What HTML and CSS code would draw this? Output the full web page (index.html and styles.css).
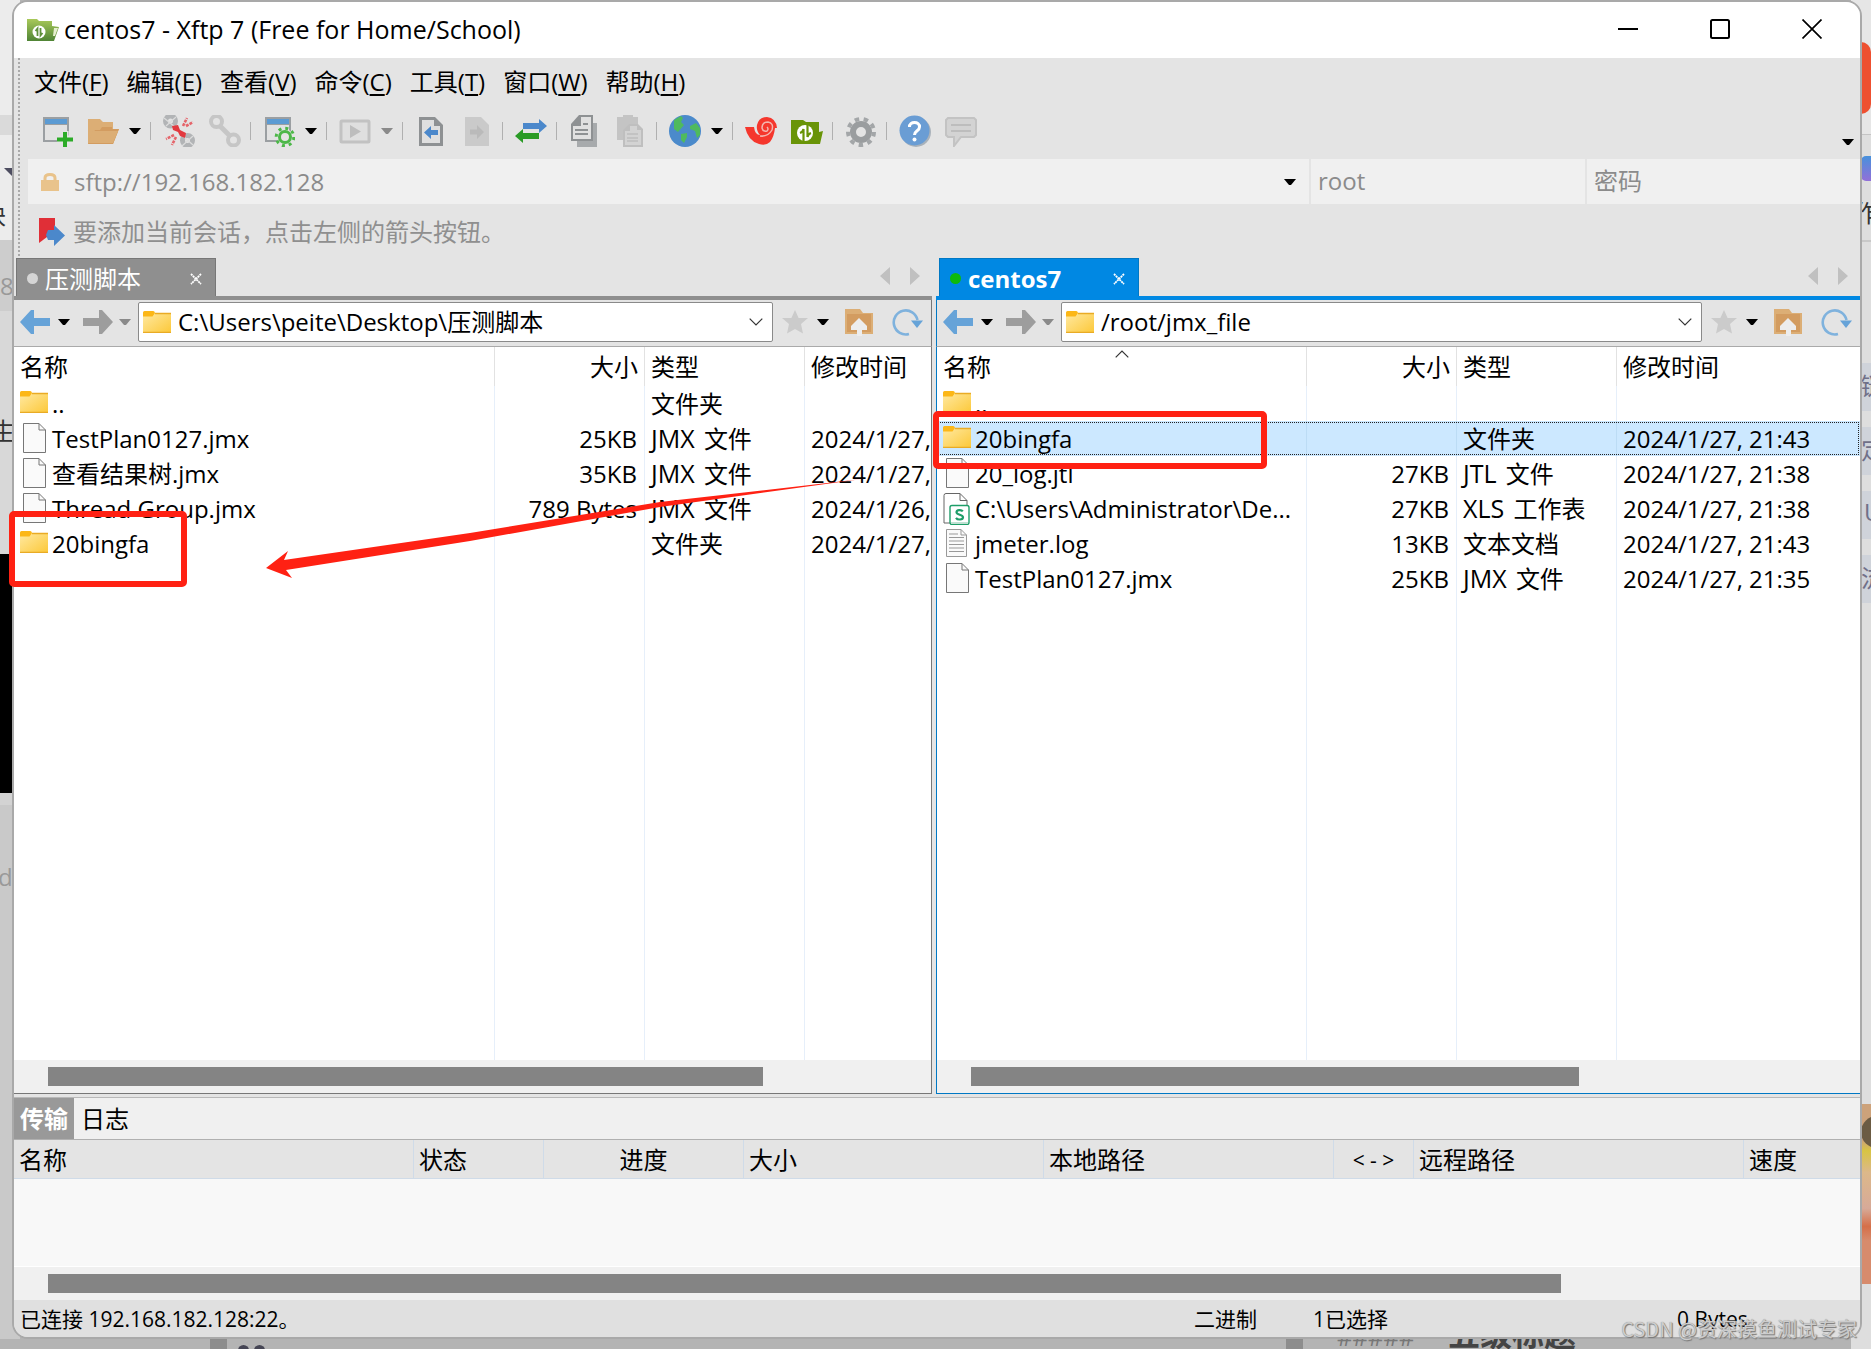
FILE: index.html
```html
<!DOCTYPE html>
<html lang="zh-CN">
<head>
<meta charset="utf-8">
<title>centos7 - Xftp 7</title>
<link rel="stylesheet" href="styles.css">
</head>
<body>
<svg class="defs" aria-hidden="true">
  <defs>
    <linearGradient id="gold" x1="0" y1="0" x2="1" y2="1"><stop offset="0" stop-color="#ffe9a2"/><stop offset="1" stop-color="#fcc838"/></linearGradient>
    <linearGradient id="leaf" x1="0" y1="0" x2="0" y2="1"><stop offset="0" stop-color="#a9c95a"/><stop offset="1" stop-color="#4f8435"/></linearGradient>
  </defs>
  <symbol id="i-folder" viewBox="0 0 28 22"><path d="M0 1.5Q0 0 1.500 0H10Q12 0 12 3V6H0z" fill="#fcb717"/><path d="M0 5.500H9.500L12 2H28V22H0z" fill="url(#gold)"/><path d="M12 2.500H28M0 21.300H28" stroke="#e9ab25" stroke-width="1.300"/></symbol>
  <symbol id="i-file" viewBox="0 0 24 30"><path d="M.5.500H16L22.500 7V29.500H.5z" fill="#fafafa" stroke="#777"/><path d="M16 .5V7H22.500" fill="none" stroke="#777"/></symbol>
  <symbol id="i-text" viewBox="0 0 24 30"><path d="M.5 1.500H15L20.500 7V28.500H.5z" fill="#fafafa" stroke="#999"/><path d="M15 1.500V7H20.500M3 6H12M3 9.500H18M3 13H18M3 16.500H18M3 20H18M3 23.500H18" fill="none" stroke="#999"/></symbol>
  <symbol id="i-xls" viewBox="0 0 27 32"><path d="M3 .5H17L24 7.500V30H1V2.500Q1 .5 3 .5z" fill="#fff" stroke="#666"/><path d="M17 .5V7.500H24" fill="none" stroke="#666"/><rect x="7" y="12.500" width="19" height="19" rx="2" fill="#fff" stroke="#1e9e69" stroke-width="1.400"/><path d="M8 29H25V31H8z" fill="#bfe0d2"/><path d="M19.800 18.300C18.500 16.500 13.500 16.500 13.500 19.300S20 21.500 20 24.300S14.500 27.200 13 24.800" fill="none" stroke="#1e9e69" stroke-width="2.200"/></symbol>
  <symbol id="i-back" viewBox="0 0 30 24"><path d="M0 12L11 0H14V8H30V16H14V24H11z" fill="#66a3d8"/></symbol>
  <symbol id="i-forward" viewBox="0 0 30 24"><path d="M30 12L19 0H16V8H0V16H16V24H19z" fill="#9d9d9d"/></symbol>
  <symbol id="i-caret" viewBox="0 0 12 8"><path d="M0 1H12L7 7H5z" fill="currentColor"/></symbol>
  <symbol id="i-chevron" viewBox="0 0 14 8"><path d="M.7.7L7 7L13.300.7" fill="none" stroke="#333" stroke-width="1.200"/></symbol>
  <symbol id="i-star" viewBox="0 0 28 26"><path d="M14 1L17.600 9H27L20 15L22 24.500L14 20L6 24.500L8 15L1 9H10.400z" fill="#cbcbcb"/></symbol>
  <symbol id="i-up" viewBox="0 0 30 28"><path d="M1 1H16L19 5H29V26H1z" fill="#dcae75"/><path d="M3 6H27V24H3z" fill="#d39c60"/><path d="M15 10L23 18V22H18V28H13V22H7V18z" fill="#ededed"/></symbol>
  <symbol id="i-refresh" viewBox="0 0 31 28"><path d="M17 26A12 12 0 1 1 25.500 12" fill="none" stroke="#7fb2dd" stroke-width="2.600"/><path d="M19 12.500H31L25 20z" fill="#66a3d8"/></symbol>
  <symbol id="i-x" viewBox="0 0 12 12"><path d="M1 1L11 11M11 1L1 11" stroke="#fff" stroke-width="1.800" stroke-dasharray="2 .6"/></symbol>
  <symbol id="i-xftp" viewBox="0 0 32 22"><path d="M0 0H10L12 2H25V7L32 8L27 22H0z" fill="url(#leaf)"/><path d="M27 9H31L28 17H26z" fill="#e6efcf"/><circle cx="12" cy="13" r="6.500" fill="#fff"/><path d="M10.500 17V9.500L8.500 12M13.500 9V16.500L15.500 14" fill="none" stroke="#5e903b" stroke-width="1.800"/></symbol>
  <symbol id="i-doc" viewBox="0 0 32 32"><path d="M4 2H20L28 10V31H4z" fill="currentColor"/><path d="M7 5H19V11H25V28H7z" fill="#dfdfdf"/></symbol>
</svg>

<div class="desktop">
  <div class="backdrop" aria-hidden="true">
    <div class="strip strip-left">
      <i class="band" style="top:0;height:115px;background:#ececec"></i>
      <i class="band" style="top:115px;height:20px;background:#dadada"></i>
      <i class="band" style="top:135px;height:105px;background:#ececec"></i>
      <i class="band" style="top:240px;height:71px;background:#cdcdcd"></i>
      <i class="band" style="top:311px;height:243px;background:#d8d8d8"></i>
      <i class="band" style="top:554px;height:239px;background:#000"></i>
      <i class="band" style="top:793px;height:12px;background:#d3d3d3"></i>
      <i class="notch"></i>
      <span class="bit bit-a">块</span><span class="bit bit-b">8</span><span class="bit bit-c">生</span><span class="bit bit-d">d</span>
    </div>
    <div class="strip strip-right">
      <i class="band" style="top:0;height:134px;background:#e6e6e6"></i>
      <i class="band" style="top:134px;height:1px;background:#c4c4c4"></i>
      <i class="disc"></i><i class="bot"></i>
      <i class="band" style="top:240px;height:2px;background:#c8c8c8"></i>
      <i class="band label" style="top:363px"></i><i class="band label" style="top:427px"></i>
      <i class="band label" style="top:491px"></i><i class="band label" style="top:555px"></i>
      <span class="bit bit-e">作</span><span class="bit tag" style="top:369px">链</span><span class="bit tag" style="top:433px">定</span><span class="bit tag tag-u" style="top:495px">U</span><span class="bit tag" style="top:561px">流</span>
      <i class="photo"></i><i class="eye"></i>
    </div>
    <div class="strip strip-bottom">
      <i class="post" style="left:210px"></i><i class="drop-mark" style="left:238px"></i><i class="drop-mark" style="left:254px"></i>
      <i class="post" style="left:1286px"></i>
      <span class="hash">#####</span><span class="heading">五级标题</span>
    </div>
  </div>

  <main class="window">
    <header class="titlebar">
      <svg class="app-icon"><use href="#i-xftp"/></svg>
      <h1>centos7 - Xftp 7 (Free for Home/School)</h1>
      <button aria-label="最小化"><svg width="20" height="20"><path d="M0 10H20" stroke="#000" stroke-width="2"/></svg></button>
      <button aria-label="最大化"><svg width="20" height="20"><rect x="1" y="1" width="18" height="18" rx="1.500" fill="none" stroke="#000" stroke-width="2"/></svg></button>
      <button aria-label="关闭"><svg width="20" height="20"><path d="M.5.500L19.500 19.500M19.500.500L.5 19.500" stroke="#000" stroke-width="1.700"/></svg></button>
    </header>

    <div class="chrome">
      <nav class="menu">
        <button>文件<span>(<u>F</u>)</span></button><button>编辑<span>(<u>E</u>)</span></button><button>查看<span>(<u>V</u>)</span></button><button>命令<span>(<u>C</u>)</span></button><button>工具<span>(<u>T</u>)</span></button><button>窗口<span>(<u>W</u>)</span></button><button>帮助<span>(<u>H</u>)</span></button>
      </nav>
      <div class="toolbar">
        <button aria-label="新建"><svg viewBox="0 0 32 32"><path d="M2 2H28V27H2z" fill="#9b9fa2"/><path d="M4 4H26V9H4z" fill="#5c9bd3"/><path d="M4 10H26V25H4z" fill="#e2e2e2"/><path d="M24 16V32M16 24H32" stroke="#e4e4e4" stroke-width="7"/><path d="M24 17V32M16 24.500H32" stroke="#2cab28" stroke-width="4"/></svg></button>
        <button aria-label="打开"><svg viewBox="0 0 32 32"><path d="M1 4H13L16 7H26V14H32L26 29H1z" fill="#dcae75"/><path d="M3 25L8 15H13L15 12H25V14H32L26 29H1z" fill="#d39c60"/><path d="M6 16H31L26 28H1z" fill="#dcae75"/></svg></button>
        <button class="drop" aria-label="打开列表"><svg><use href="#i-caret"/></svg></button>
        <i class="sep"></i>
        <button aria-label="断开"><svg viewBox="0 0 32 32"><g fill="none" stroke="#b2b4b6" stroke-width="5"><circle cx="7.500" cy="6" r="5"/><circle cx="24.500" cy="25.500" r="5"/></g><g fill="none" stroke="#dcdcdc" stroke-width="1.200"><path d="M1 3L12 12M13 2L3 11M19 20L30 30M30 21L19 31"/></g><path d="M9 11L15 10L17 15L23 18L22 23L17 21L15 17L10 15z" fill="#e2393f"/><path d="M20 11L24 3M23 11L30 7M11 20L3 24M13 22L9 30" stroke="#e5646a" stroke-width="2.600" stroke-dasharray="3 1"/></svg></button>
        <button disabled aria-label="连接"><svg viewBox="0 0 32 32"><g fill="none" stroke="#c6c6c6" stroke-width="4"><circle cx="7.500" cy="6.500" r="5.500"/><circle cx="24.500" cy="25" r="5.500"/></g><path d="M10 10L22 22" stroke="#c6c6c6" stroke-width="5"/></svg></button>
        <i class="sep"></i>
        <button aria-label="属性"><svg viewBox="0 0 32 32"><path d="M2 2H28V27H2z" fill="#9b9fa2"/><path d="M4 4H26V9H4z" fill="#5c9bd3"/><path d="M4 10H26V25H4z" fill="#e2e2e2"/><circle cx="22" cy="22" r="8" fill="#e4e4e4"/><circle cx="22" cy="22" r="5.500" fill="none" stroke="#4cb748" stroke-width="3"/><circle cx="22" cy="22" r="8.800" fill="none" stroke="#4cb748" stroke-width="3" stroke-dasharray="3 3.910"/></svg></button>
        <button class="drop" aria-label="属性列表"><svg><use href="#i-caret"/></svg></button>
        <i class="sep"></i>
        <button disabled aria-label="运行"><svg viewBox="0 0 32 32"><rect x="2" y="6" width="28" height="21" rx="1" fill="#dfdfdf" stroke="#c2c2c2" stroke-width="3"/><path d="M11 10L22 16.500L11 23z" fill="#bdbdbd"/></svg></button>
        <button disabled class="drop" aria-label="运行列表"><svg><use href="#i-caret"/></svg></button>
        <i class="sep"></i>
        <button class="doc" aria-label="向左传输"><svg viewBox="0 0 32 32"><use href="#i-doc"/><path d="M9 17.500L16 11V15H23V20H16V24z" fill="#4b88cb"/></svg></button>
        <button class="doc" disabled aria-label="向右传输"><svg viewBox="0 0 32 32"><path d="M4 2H20L28 10V31H4z" fill="#cacaca"/><path d="M23 17L16 10V14.500H9V19.500H16V24z" fill="#bababa"/></svg></button>
        <i class="sep"></i>
        <button aria-label="同步"><svg viewBox="0 0 32 32"><path d="M8 8H24V4L32 11L24 18V14H8z" fill="#4b88cb"/><path d="M24 18H8V14L0 21L8 28V24H24z" fill="#2a9b26"/></svg></button>
        <i class="sep"></i>
        <button aria-label="复制"><svg viewBox="0 0 32 32"><path d="M8 8H28V32H8z" fill="#a7aaac"/><path d="M10 0H24V26H2V9z" fill="#8e9193"/><path d="M12 2H22V24H4V11H12z" fill="#e0e0e0"/><path d="M14 9H19M6 15H19M6 19H19" stroke="#8e9193" stroke-width="1.800"/></svg></button>
        <button disabled aria-label="粘贴"><svg viewBox="0 0 32 32"><path d="M2 2H8V0H18V2H23V25H2z" fill="#c4c4c4"/><path d="M14 9H23L28 14V32H8V15z" fill="#bfbfbf"/><path d="M15 11H22V15H26V30H10V16H15z" fill="#d3d3d3"/><path d="M12 19H23M12 23H23M12 26H23" stroke="#bfbfbf" stroke-width="1.400"/></svg></button>
        <i class="sep"></i>
        <button aria-label="语言"><svg viewBox="0 0 32 32"><circle cx="16" cy="16" r="16" fill="#4b8acb"/><path d="M5 5L12 1L14 3L12 7L15 10L9 17L5 14zM12 19L18 18V22L15 28L12 25zM21 11L27 8L31 13V20L28 23L26 16L21 14z" fill="#4fba5e"/></svg></button>
        <button class="drop" aria-label="语言列表"><svg><use href="#i-caret"/></svg></button>
        <i class="sep"></i>
        <button aria-label="Xshell"><svg viewBox="0 0 32 32"><path d="M0 12H9Q10 20 15 20Q11 16 12 10Q14 2 22 2Q31 3 32 13H30Q29 22 25 27Q21 31 14 29Q3 26 0 12" fill="#f5372d"/><path d="M15 21Q23 22 27 15Q29 8 23 7Q17 7 17 13Q18 17 22 16Q24 14 22 12" fill="none" stroke="#f3b4ae" stroke-width="1.500"/></svg></button>
        <button aria-label="Xftp"><svg viewBox="0 0 32 32"><path d="M0 5H12L15 7H28V17L32 16L29 29H0z" fill="#699407"/><circle cx="14" cy="18" r="8" fill="#fff"/><path d="M12.500 26V14Q12 17 9 18M16.500 10V22Q17 19 20 18" fill="none" stroke="#699407" stroke-width="2.200"/></svg></button>
        <i class="sep"></i>
        <button aria-label="选项"><svg viewBox="0 0 32 32"><circle cx="16" cy="17" r="8" fill="none" stroke="#9a9d9f" stroke-width="6"/><circle cx="16" cy="17" r="13" fill="none" stroke="#a3a6a8" stroke-width="4" stroke-dasharray="4.500 4.580"/></svg></button>
        <i class="sep"></i>
        <button aria-label="帮助"><svg viewBox="0 0 32 32"><circle cx="17" cy="17" r="15" fill="#a9b2ba"/><circle cx="15.500" cy="15.500" r="15" fill="#6a9dd4"/><path d="M10.500 12C10 6 21 6 20.500 12C20.500 16 15.500 15.500 15.500 20" fill="none" stroke="#fff" stroke-width="3"/><circle cx="15.500" cy="24.500" r="2" fill="#fff"/></svg></button>
        <button disabled aria-label="反馈"><svg viewBox="0 0 32 32"><path d="M3 3H29L31 5V20L29 22H16L9 31V22H3L1 20V5z" fill="#d3d3d3" stroke="#c3c3c3" stroke-width="2"/><path d="M6 10H26M6 16H26" stroke="#bdbdbd" stroke-width="2"/></svg></button>
        <button class="overflow" aria-label="更多"><svg><use href="#i-caret"/></svg></button>
      </div>
      <div class="address">
        <label class="host"><svg viewBox="0 0 18 18"><path d="M4 8V5Q4 1.500 9 1.500T14 5V8" fill="none" stroke="#e9c38b" stroke-width="3"/><path d="M0 7H18V18H0z" fill="#e9c38b"/></svg><input aria-label="主机" value="sftp://192.168.182.128"><button aria-label="主机列表"><svg><use href="#i-caret"/></svg></button></label>
        <input aria-label="用户名" value="root">
        <input aria-label="密码" type="password" placeholder="密码">
      </div>
      <div class="hint"><svg viewBox="0 0 26 28"><path d="M0 0H16V13L0 25z" fill="#e02f37"/><path d="M9 12H15V7L26 17.500L15 28V22H9L7 17z" fill="#4b88cb"/></svg><p>要添加当前会话，点击左侧的箭头按钮。</p></div>
    </div>

    <div class="panels">
      <section class="panel local">
        <div class="tabs">
          <div class="tab"><i class="dot"></i><span>压测脚本</span><button aria-label="关闭标签"><svg><use href="#i-x"/></svg></button></div>
          <svg class="scroller" viewBox="0 0 40 18"><path d="M10 0V18L0 9zM30 0V18L40 9z" fill="#c0c0c0"/></svg>
        </div>
        <div class="nav">
          <button aria-label="后退"><svg class="arrow"><use href="#i-back"/></svg></button><button class="drop" aria-label="后退列表"><svg><use href="#i-caret"/></svg></button>
          <button class="fwd" disabled aria-label="前进"><svg class="arrow"><use href="#i-forward"/></svg></button><button class="drop narrow" disabled aria-label="前进列表"><svg><use href="#i-caret"/></svg></button>
          <label class="path"><svg class="folder"><use href="#i-folder"/></svg><select aria-label="本地路径"><option>C:\Users\peite\Desktop\压测脚本</option></select><svg class="chevron"><use href="#i-chevron"/></svg></label>
          <button aria-label="书签"><svg class="star"><use href="#i-star"/></svg></button><button class="drop" aria-label="书签列表"><svg><use href="#i-caret"/></svg></button>
          <button class="up" aria-label="上级"><svg><use href="#i-up"/></svg></button>
          <button class="refresh" aria-label="刷新"><svg><use href="#i-refresh"/></svg></button>
        </div>
        <div class="list">
          <table>
            <colgroup><col class="c-name"><col class="c-size"><col class="c-type"><col class="c-date"></colgroup>
            <thead><tr><th>名称</th><th class="num">大小</th><th>类型</th><th>修改时间</th></tr></thead>
            <tbody>
              <tr><td><div class="name"><svg class="folder"><use href="#i-folder"/></svg><span>..</span></div></td><td></td><td>文件夹</td><td></td></tr>
              <tr><td><div class="name"><svg class="file"><use href="#i-file"/></svg><span>TestPlan0127.jmx</span></div></td><td class="num">25KB</td><td><span class="ext">JMX</span> 文件</td><td>2024/1/27, 21:36</td></tr>
              <tr><td><div class="name"><svg class="file"><use href="#i-file"/></svg><span>查看结果树.jmx</span></div></td><td class="num">35KB</td><td><span class="ext">JMX</span> 文件</td><td>2024/1/27, 21:30</td></tr>
              <tr><td><div class="name"><svg class="file"><use href="#i-file"/></svg><span>Thread Group.jmx</span></div></td><td class="num">789 Bytes</td><td><span class="ext">JMX</span> 文件</td><td>2024/1/26, 20:10</td></tr>
              <tr><td><div class="name"><svg class="folder"><use href="#i-folder"/></svg><span>20bingfa</span></div></td><td></td><td>文件夹</td><td>2024/1/27, 21:45</td></tr>
              <tr class="filler"><td></td><td></td><td></td><td></td></tr>
            </tbody>
          </table>
        </div>
        <div class="scroll"><i style="width:81%"></i></div>
      </section>

      <section class="panel remote">
        <div class="tabs">
          <div class="tab"><i class="dot"></i><span>centos7</span><button aria-label="关闭标签"><svg><use href="#i-x"/></svg></button></div>
          <svg class="scroller" viewBox="0 0 40 18"><path d="M10 0V18L0 9zM30 0V18L40 9z" fill="#c0c0c0"/></svg>
        </div>
        <div class="nav">
          <button aria-label="后退"><svg class="arrow"><use href="#i-back"/></svg></button><button class="drop" aria-label="后退列表"><svg><use href="#i-caret"/></svg></button>
          <button class="fwd" disabled aria-label="前进"><svg class="arrow"><use href="#i-forward"/></svg></button><button class="drop narrow" disabled aria-label="前进列表"><svg><use href="#i-caret"/></svg></button>
          <label class="path"><svg class="folder"><use href="#i-folder"/></svg><select aria-label="远程路径"><option>/root/jmx_file</option></select><svg class="chevron"><use href="#i-chevron"/></svg></label>
          <button aria-label="书签"><svg class="star"><use href="#i-star"/></svg></button><button class="drop" aria-label="书签列表"><svg><use href="#i-caret"/></svg></button>
          <button class="up" aria-label="上级"><svg><use href="#i-up"/></svg></button>
          <button class="refresh" aria-label="刷新"><svg><use href="#i-refresh"/></svg></button>
        </div>
        <div class="list">
          <table>
            <colgroup><col class="c-name"><col class="c-size"><col class="c-type"><col class="c-date"></colgroup>
            <thead><tr><th>名称<svg class="sort"><use href="#i-chevron"/></svg></th><th class="num">大小</th><th>类型</th><th>修改时间</th></tr></thead>
            <tbody>
              <tr><td><div class="name"><svg class="folder"><use href="#i-folder"/></svg><span>..</span></div></td><td></td><td></td><td></td></tr>
              <tr class="selected"><td><div class="name"><svg class="folder"><use href="#i-folder"/></svg><span>20bingfa</span></div></td><td></td><td>文件夹</td><td>2024/1/27, 21:43</td></tr>
              <tr><td><div class="name"><svg class="file"><use href="#i-file"/></svg><span>20_log.jtl</span></div></td><td class="num">27KB</td><td><span class="ext">JTL</span> 文件</td><td>2024/1/27, 21:38</td></tr>
              <tr><td><div class="name"><svg class="xls"><use href="#i-xls"/></svg><span>C:\Users\Administrator\De...</span></div></td><td class="num">27KB</td><td><span class="ext">XLS</span> 工作表</td><td>2024/1/27, 21:38</td></tr>
              <tr><td><div class="name"><svg class="file"><use href="#i-text"/></svg><span>jmeter.log</span></div></td><td class="num">13KB</td><td>文本文档</td><td>2024/1/27, 21:43</td></tr>
              <tr><td><div class="name"><svg class="file"><use href="#i-file"/></svg><span>TestPlan0127.jmx</span></div></td><td class="num">25KB</td><td><span class="ext">JMX</span> 文件</td><td>2024/1/27, 21:35</td></tr>
              <tr class="filler"><td></td><td></td><td></td><td></td></tr>
            </tbody>
          </table>
        </div>
        <div class="scroll"><i style="width:68.4%"></i></div>
      </section>
    </div>

    <section class="transfers">
      <div class="switch"><button class="on">传输</button><button>日志</button></div>
      <table>
        <colgroup><col class="t400"><col class="t130"><col class="t200"><col class="t300"><col class="t290"><col class="t80"><col class="t330"><col></colgroup>
        <thead><tr><th>名称</th><th>状态</th><th class="mid">进度</th><th>大小</th><th>本地路径</th><th class="mid arrows">&lt; - &gt;</th><th>远程路径</th><th>速度</th></tr></thead>
      </table>
      <div class="empty"></div>
      <div class="scroll"><i style="width:83.5%"></i></div>
    </section>

    <footer class="status"><span>已连接 192.168.182.128:22。</span><span>二进制</span><span>1已选择</span><span>0 Bytes</span></footer>
  </main>

  <svg class="annotations" width="1300" height="620" aria-hidden="true">
    <g fill="none" stroke="#ff2113" stroke-width="6"><rect x="12" y="514" width="172" height="70" rx="2"/><rect x="936" y="414" width="328" height="52" rx="2"/></g>
    <path d="M266 568L288 551L284 560L470 533L660 502L862 479L660 507L470 541L286 570L292 578z" fill="#ff2113"/>
  </svg>
  <p class="watermark">CSDN @资深摸鱼测试专家</p>
</div>
</body>
</html>
```
FILE: styles.css
```css
* { box-sizing: border-box; }
body { margin: 0; font: 24px/34px "Open Sans", "Noto Sans CJK SC", sans-serif; color: #000; }
h1, p { margin: 0; font-weight: 400; }
button, input, select { font: inherit; color: inherit; border: 0; padding: 0; margin: 0; background: none; border-radius: 0; outline: 0; }
button { display: flex; align-items: center; justify-content: center; flex: none; }
svg { display: block; flex: none; }
.defs { position: absolute; width: 0; height: 0; }

.desktop { position: relative; min-height: 100vh; padding: 0 9px 10px 12px; display: flex; overflow: hidden; background: #b4b4b4; }
.window { position: relative; flex: 1; min-width: 0; display: flex; flex-direction: column; border: 2px solid #a9a9a9; border-radius: 16px; overflow: hidden; background: #e4e4e4; }

/* Slivers of the windows behind */
.strip, .band, .bit, .notch, .disc, .bot, .photo, .eye, .post, .drop-mark, .hash, .heading { position: absolute; }
.strip { overflow: hidden; }
.strip-left { left: 0; top: 0; bottom: 10px; width: 20px; background: #c9c9c9; }
.strip-right { right: 0; top: 0; bottom: 0; width: 20px; background: #dedede; }
.strip-bottom { left: 0; right: 0; bottom: 0; height: 20px; }
.band { left: 0; right: 0; }
.label { height: 48px; background: #cfd3da; }
.bit { font-size: 24px; color: #333; }
.bit-a { left: -18px; top: 198px; }
.bit-b { left: 0; top: 269px; color: #999; }
.bit-c { left: -9px; top: 414px; }
.bit-d { left: -2px; top: 860px; color: #999; }
.bit-e { left: 3px; top: 196px; }
.tag { left: 10px; color: #707088; }
.tag-u { left: 13px; }
.notch { left: 4px; top: 168px; border: 8px solid transparent; border-top-color: #4d4d60; }
.disc { left: -52px; top: 42px; width: 72px; height: 72px; background: #ee5030; border-radius: 10px; }
.bot { left: 10px; top: 156px; width: 24px; height: 25px; border-radius: 5px; background: linear-gradient(#4791dc, #9270d8); }
.photo { left: 0; right: 0; top: 1104px; height: 180px; background: linear-gradient(#cda27a 0 20%, #d8c443 26%, #dcb88a 38%, #d7aa98 58%, #d56f49 68%, #d78b6c 76%); }
.eye { left: 10px; top: 1116px; width: 32px; height: 32px; border-radius: 50%; background: #6b5b43; }
.post { bottom: 0; width: 17px; height: 20px; background: #8d8d8d; }
.drop-mark { bottom: -6px; width: 11px; height: 10px; border-radius: 6px 6px 0 0; background: #454554; }
.hash { left: 1337px; top: -9px; font-size: 24px; color: #777; }
.heading { left: 1448px; top: -12px; font-size: 32px; font-weight: 700; color: #444; }

.titlebar { height: 56px; background: #fff; display: flex; align-items: center; padding: 0 2px 0 13px; }
.titlebar h1 { flex: 1; margin-left: 5px; padding-bottom: 2px; font-size: 25px; }
.titlebar button { width: 92px; height: 54px; align-self: flex-start; }
.app-icon { width: 32px; height: 22px; }

.chrome { position: relative; padding-left: 14px; }
.chrome::before { content: ""; position: absolute; left: 4px; top: 0; bottom: 2px; border-left: 2px dotted #a9a9a9; }
.menu { display: flex; gap: 18px; height: 50px; align-items: center; padding: 0 0 2px 6px; }
.menu u { text-underline-offset: 3px; text-decoration-thickness: 2px; }
.toolbar { display: flex; align-items: center; height: 46px; margin-bottom: 5px; padding-left: 13px; }
.toolbar button svg { width: 32px; height: 32px; }
.toolbar button + button { margin-left: 14px; }
.toolbar button + .drop { width: 31px; margin-left: 0; }
.toolbar .drop svg, .toolbar .overflow svg, .drop svg, .host button svg { width: 12px; height: 8px; }
.toolbar .overflow { margin-left: auto; padding: 22px 6px 0 0; }
.drop:disabled { color: #8a8a8a; }
.doc { color: #8e9193; }
.sep { width: 1px; height: 18px; background: #b0b0b0; margin: 0 12px 0 9px; }
.drop + .sep { margin-left: 0; }
.address { display: grid; grid-template-columns: 1281fr 274fr 273fr; gap: 2px; height: 45px; color: #8b8b8b; }
.address > * { background: #f0f0f0; min-width: 0; }
.address > input { padding: 0 0 2px 7px; }
.host { display: flex; align-items: center; padding: 0 13px; }
.host > svg { width: 18px; height: 18px; margin-right: 15px; }
.host input { flex: 1; min-width: 0; }
.host button { color: #000; }
input::placeholder { color: #8b8b8b; opacity: 1; }
.hint { display: flex; align-items: center; height: 54px; padding: 2px 0 0 11px; gap: 8px; color: #8f8f8f; }
.hint svg { width: 26px; height: 28px; }

.panels { flex: 1; display: grid; grid-template-columns: 918fr 924fr; gap: 4px; min-height: 0; }
.panel { --accent: #8f8f8f; --edge: #777; position: relative; display: flex; flex-direction: column; min-width: 0; }
.remote { --accent: #0088e3; --edge: #0078c4; }
.tabs { display: flex; justify-content: space-between; height: 42px; padding-left: 2px; border-bottom: 4px solid var(--accent); }
.tab { display: flex; align-items: center; width: 200px; height: 38px; padding: 2px 13px 0 10px; background: var(--accent); border: 1px solid var(--edge); border-bottom: 0; color: #fff; }
.tab span { flex: 1; margin-left: 7px; }
.tab .dot { width: 11px; height: 11px; border-radius: 50%; background: #d5d5d5; }
.tab button svg { width: 12px; height: 12px; }
.remote .tabs { padding-left: 3px; }
.remote .dot { background: #0db90d; }
.remote .tab span { font-weight: 700; }
.scroller { width: 40px; height: 18px; margin: 9px 12px 0 0; }
.nav { display: flex; align-items: center; height: 47px; padding: 0 8px 3px 6px; border-bottom: 1px solid #aaa; border-right: 1px solid var(--edge); }
.remote .nav, .remote .list, .remote .scroll { border-left: 1px solid var(--edge); border-right: 0; }
.arrow { width: 30px; height: 24px; }
.nav .drop { width: 28px; }
.nav .narrow { width: 24px; margin-right: 1px; }
.fwd { margin-left: 5px; }
.path { flex: 1; min-width: 0; display: flex; align-items: center; height: 40px; margin-right: 8px; padding: 0 9px 0 4px; background: #fff; border: 1px solid #8a8a8a; border-radius: 2px; }
.path select { flex: 1; min-width: 0; appearance: none; padding-left: 7px; }
.folder { width: 28px; height: 22px; }
.chevron { width: 14px; height: 8px; }
.star { width: 28px; height: 26px; }
.up { margin-left: 7px; }
.up svg { width: 30px; height: 28px; }
.refresh { margin-left: 18px; }
.refresh svg { width: 31px; height: 28px; }

table { border-spacing: 0; table-layout: fixed; }
th { font-weight: 400; text-align: left; position: relative; }
th, td { padding: 0 6px; white-space: nowrap; }
.list { flex: 1; min-height: 300px; display: flex; overflow: hidden; background: #fff; border-right: 1px solid var(--edge); }
.list table { width: 1040px; flex: none; height: 100%; }
.remote .list table { width: 100%; }
.c-name { width: 481px; }
.remote .c-name { width: 370px; }
.c-size { width: 150px; }
.c-type { width: 160px; }
.list th { height: 39px; padding-left: 6px; border-right: 1px solid #e2e2e2; }
.list td { height: 35px; border-right: 1px solid #e6effa; }
.list th:last-child, .list td:last-child { border-right: 0; }
.list .num { text-align: right; }
.list td.num { padding-right: 7px; }
.list .filler td { height: auto; }
.ext { font-size: 25px; padding-right: 3px; }
.name { display: flex; align-items: center; gap: 4px; height: 34px; }
.name .folder { margin-top: -4px; }
.file { width: 24px; height: 30px; margin: -2px 1px 0 3px; }
.xls { width: 27px; height: 32px; margin-right: 1px; }
.selected td { background: #cce8ff; border-color: #bcdcf5; }
.selected { outline: 1px dotted #222; outline-offset: -2px; }
.sort { position: absolute; left: 50%; top: 3px; width: 14px; height: 8px; margin-left: -7px; transform: rotate(180deg); }
.scroll { height: 34px; padding: 7px 0 0 34px; background: #f0f0f0; }
.scroll i { display: block; height: 19px; background: #848484; }
.panel .scroll { border-bottom: 1px solid var(--edge); }
.local .scroll { border-right: 1px solid var(--edge); }

.transfers { margin-top: 3px; border-top: 1px solid #b8b8b8; }
.switch { display: flex; height: 42px; background: #f0f0f0; border-bottom: 1px solid #b0b0b0; }
.switch button { padding: 0 6px; }
.switch button + button { padding: 0 7px; }
.switch .on { background: #999; color: #fff; font-weight: 700; }
.transfers table { width: 100%; }
.transfers th { height: 39px; padding: 2px 5px 0; border-right: 1px solid #cfdbe8; border-bottom: 1px solid #cfdbe8; }
.transfers th:last-child { border-right: 0; }
.transfers .mid { text-align: center; }
.transfers .arrows { font-size: 21px; }
.t400 { width: 400px; }
.t130 { width: 130px; }
.t200 { width: 200px; }
.t300 { width: 300px; }
.t290 { width: 290px; }
.t80 { width: 80px; }
.t330 { width: 330px; }
.empty { height: 88px; background: #f8f8f8; border-bottom: 1px solid #fff; }
.transfers .scroll { height: 33px; }
.status { display: grid; grid-template-columns: 1174fr 119fr 364fr 183fr; align-items: center; height: 37px; padding-left: 6px; background: #e0e0e0; font-size: 21px; line-height: 30px; }

.annotations { position: absolute; left: 0; top: 0; }
.watermark { position: absolute; right: 14px; bottom: 3px; font: 20px/34px "Noto Sans CJK SC", sans-serif; color: #ccc; text-shadow: 1px 1px 1px #777, 0 0 1px #888; }
```
